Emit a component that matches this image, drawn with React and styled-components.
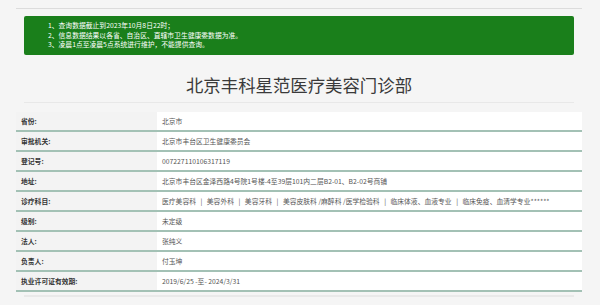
import styled, { createGlobalStyle } from "styled-components"

const Global = createGlobalStyle`
    html, body {
        margin: 0;
        background: #f5f5f5;
        font-family: "Noto Sans CJK SC", "Noto Sans", sans-serif;
    }
`

const Page = styled.div`
    padding: 8px 18px 0 16px;
`

const TopRule = styled.div`
    border-top: 1px solid #dcdcdc;
`

const Notice = styled.ul`
    list-style: none;
    margin: 7px 8px 0;
    padding: 5px 24px;
    background: #1a7f1b;
    border-radius: 2px;
    color: #fff;
    font-size: 6.8px;
    line-height: 9.7px;
`

const Title = styled.h1`
    margin: 18px 8px 0;
    padding-bottom: 5px;
    border-bottom: 1px solid #e8e8e8;
    text-align: center;
    font-size: 17.4px;
    line-height: 24px;
    font-weight: 400;
    color: #3a3a3a;
`

const Table = styled.div`
    margin-top: 9px;
    background: #fff;
`

const Row = styled.div`
    display: grid;
    grid-template-columns: 141px 1fr;
    height: 18px;
    border-bottom: 2px solid #a3c1b5;
    font-size: 6.8px;
    line-height: 18px;
    white-space: nowrap;
`

const Label = styled.div`
    background: #f3f3f3;
    padding-left: 5px;
    color: #333;
    font-weight: 700;
`

const Value = styled.div`
    padding-left: 5px;
    color: #555;
`

const Sep = styled.span`
    margin: 0 4.5px;
`

const BottomRule = styled.div`
    margin: 3px 8px 0;
    border-top: 2px solid #e9e9e9;
`

const rows = [
    ["省份:", "北京市"],
    ["审批机关:", "北京市丰台区卫生健康委员会"],
    ["登记号:", "007227110106317119"],
    ["地址:", "北京市丰台区金泽西路4号院1号楼-4至39层101内二层B2-01、B2-02号商铺"],
    ["诊疗科目:", null],
    ["级别:", "未定级"],
    ["法人:", "张纯义"],
    ["负责人:", "付玉坤"],
    ["执业许可证有效期:", "2019/6/25 -至- 2024/3/31"],
]

const subjects = [
    "医疗美容科",
    "美容外科",
    "美容牙科",
    "美容皮肤科 /麻醉科 /医学检验科",
    "临床体液、血液专业",
    "临床免疫、血清学专业******",
]

const App = () => {
    return (
        <Page>
            <Global />
            <TopRule />
            <Notice>
                <li>1、查询数据截止到2023年10月8日22时；</li>
                <li>2、信息数据结果以各省、自治区、直辖市卫生健康委数据为准。</li>
                <li>3、凌晨1点至凌晨5点系统进行维护，不能提供查询。</li>
            </Notice>
            <Title>北京丰科星范医疗美容门诊部</Title>
            <Table>
                {rows.map(([label, value]) => (
                    <Row key={label}>
                        <Label>{label}</Label>
                        <Value>
                            {value ??
                                subjects.map((s, i) => (
                                    <span key={s}>
                                        {i > 0 && <Sep>|</Sep>}
                                        {s}
                                    </span>
                                ))}
                        </Value>
                    </Row>
                ))}
            </Table>
            <BottomRule />
        </Page>
    )
}

export default App
